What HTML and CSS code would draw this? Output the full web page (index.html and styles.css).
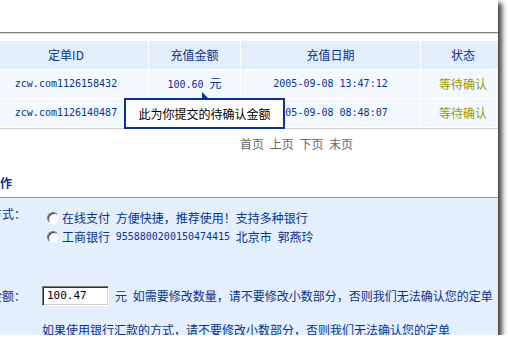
FILE: index.html
```html
<!DOCTYPE html>
<html lang="zh-CN">
<head>
<meta charset="utf-8">
<title>充值记录</title>
<link rel="stylesheet" href="styles.css">
</head>
<body>
<div class="frame">
  <div class="rule"></div>
  <div class="tbl">
    <div class="th">定单ID</div>
    <div class="th">充值金额</div>
    <div class="th">充值日期</div>
    <div class="th">状态</div>

    <div class="td"><span class="mono">zcw.com1126158432</span></div>
    <div class="td"><span class="amt"><span class="mono">100.60 </span>元</span></div>
    <div class="td"><span class="mono">2005-09-08 13:47:12</span></div>
    <div class="td st">等待确认</div>

    <div class="td"><span class="mono">zcw.com1126140487</span></div>
    <div class="td"><span class="amt"><span class="mono">100.47 </span>元</span></div>
    <div class="td"><span class="mono">2005-09-08 08:48:07</span></div>
    <div class="td st">等待确认</div>
  </div>
  <div class="pager">首页 上页 下页 末页</div>
  <div class="title">操作</div>
  <div class="form">
    <div class="frow r1">
      <div class="flabel">支付方式：</div>
      <div class="fopts">
        <div class="opt"><span class="radio"></span>在线支付 方便快捷，推荐使用！支持多种银行</div>
        <div class="opt"><span class="radio"></span>工商银行 <span class="mono">9558800200150474415</span> 北京市 郭燕玲</div>
      </div>
    </div>
    <div class="frow r2">
      <div class="flabel">充值金额：</div>
      <div class="amount">
        <div class="inp"><span class="mono big">100.47</span></div>
        <span class="note">元 如需要修改数量，请不要修改小数部分，否则我们无法确认您的定单</span>
      </div>
    </div>
    <div class="fnote">如果使用银行汇款的方式，请不要修改小数部分，否则我们无法确认您的定单</div>
  </div>

  <div class="tip">此为你提交的待确认金额</div>
  <svg class="tail" width="10" height="8" viewBox="0 0 10 8"><polygon points="2,0 2,7 9,7" fill="#0a3290"/></svg>
</div>
</body>
</html>
```

FILE: styles.css
```css
html, body {
  margin: 0;
  padding: 0;
  background: #ffffff;
}
body {
  font-family: "Noto Sans CJK SC", "Noto Sans", sans-serif;
  font-size: 12px;
  line-height: 12px;
  word-spacing: 3px;
  color: #0a3290;
}
.frame {
  position: relative;
  width: 498px;
  height: 335px;
  overflow: hidden;
  background: #ffffff;
  box-shadow: 4px 3px 5px rgba(0, 0, 0, 0.75);
}
.mono {
  font-family: "DejaVu Sans Mono", "Liberation Mono", monospace;
  font-size: 10px;
  word-spacing: 0;
  white-space: pre;
}
.amt {
  white-space: pre;
}
.rule {
  margin-top: 32px;
  height: 0;
  border-top: 1px solid #808080;
  border-bottom: 1px solid #d8d8d8;
}
.tbl {
  margin-top: 7px;
  margin-left: -16px;
  display: grid;
  grid-template-columns: 164px 91px 179px 84px;
  grid-auto-rows: 28px;
  column-gap: 1px;
  row-gap: 1px;
  padding-bottom: 1px;
  border-bottom: 1px solid #cfcfcf;
  width: 522px;
}
.th, .td {
  display: flex;
  align-items: center;
  justify-content: center;
  white-space: nowrap;
}
.th {
  background: #e3eefb;
  color: #0a3290;
}
.td {
  background: #f3f8fe;
  color: #0a3290;
}
.td.st {
  color: #999900;
}
.pager {
  margin-top: 9px;
  padding-left: 240px;
  color: #666666;
  white-space: nowrap;
}
.title {
  margin-top: 26px;
  margin-left: -12px;
  font-weight: 700;
  line-height: 14px;
  color: #0a3290;
  white-space: nowrap;
}
.form {
  margin-top: 7px;
  border-top: 1px solid #6a9cf6;
  background: #e3effc;
  height: 160px;
  padding-top: 10px;
  box-sizing: border-box;
}
.frow {
  display: flex;
}
.flabel {
  width: 26px;
  flex: 0 0 26px;
  display: flex;
  justify-content: flex-end;
  white-space: nowrap;
}
.r1 {
  align-items: flex-start;
}
.fopts {
  margin-left: 21px;
  display: flex;
  flex-direction: column;
}
.opt {
  display: flex;
  align-items: center;
  height: 19px;
  white-space: pre;
}
.radio {
  display: inline-block;
  width: 12px;
  height: 12px;
  box-sizing: border-box;
  border-radius: 50%;
  background: #ffffff;
  border: 1px solid;
  border-color: #7a7a7a #e8e8e8 #ffffff #7a7a7a;
  box-shadow: inset 1px 1px 0 #3a3a3a;
  margin-right: 3px;
}
.r2 {
  margin-top: 40px;
  align-items: center;
}
.amount {
  margin-left: 16px;
  display: flex;
  align-items: center;
  white-space: pre;
}
.inp {
  width: 67px;
  height: 20px;
  box-sizing: border-box;
  background: #ffffff;
  border: 1px solid;
  border-color: #7a7a7a #ffffff #ffffff #7a7a7a;
  box-shadow: inset 1px 1px 0 #303030, inset -1px -1px 0 #d4d0c8;
  display: flex;
  align-items: center;
  padding-left: 4px;
  color: #000000;
}
.mono.big {
  font-size: 11px;
}
.note {
  margin-left: 6px;
}
.fnote {
  margin-top: 14px;
  padding-left: 42px;
  line-height: 19px;
  white-space: pre;
}
.tip {
  position: absolute;
  left: 124px;
  top: 98px;
  width: 161px;
  height: 31px;
  box-sizing: border-box;
  border: 2px solid #0a3290;
  background: #ffffff;
  color: #000000;
  display: flex;
  align-items: center;
  justify-content: center;
  white-space: nowrap;
}
.tail {
  position: absolute;
  left: 200px;
  top: 92px;
}
```
